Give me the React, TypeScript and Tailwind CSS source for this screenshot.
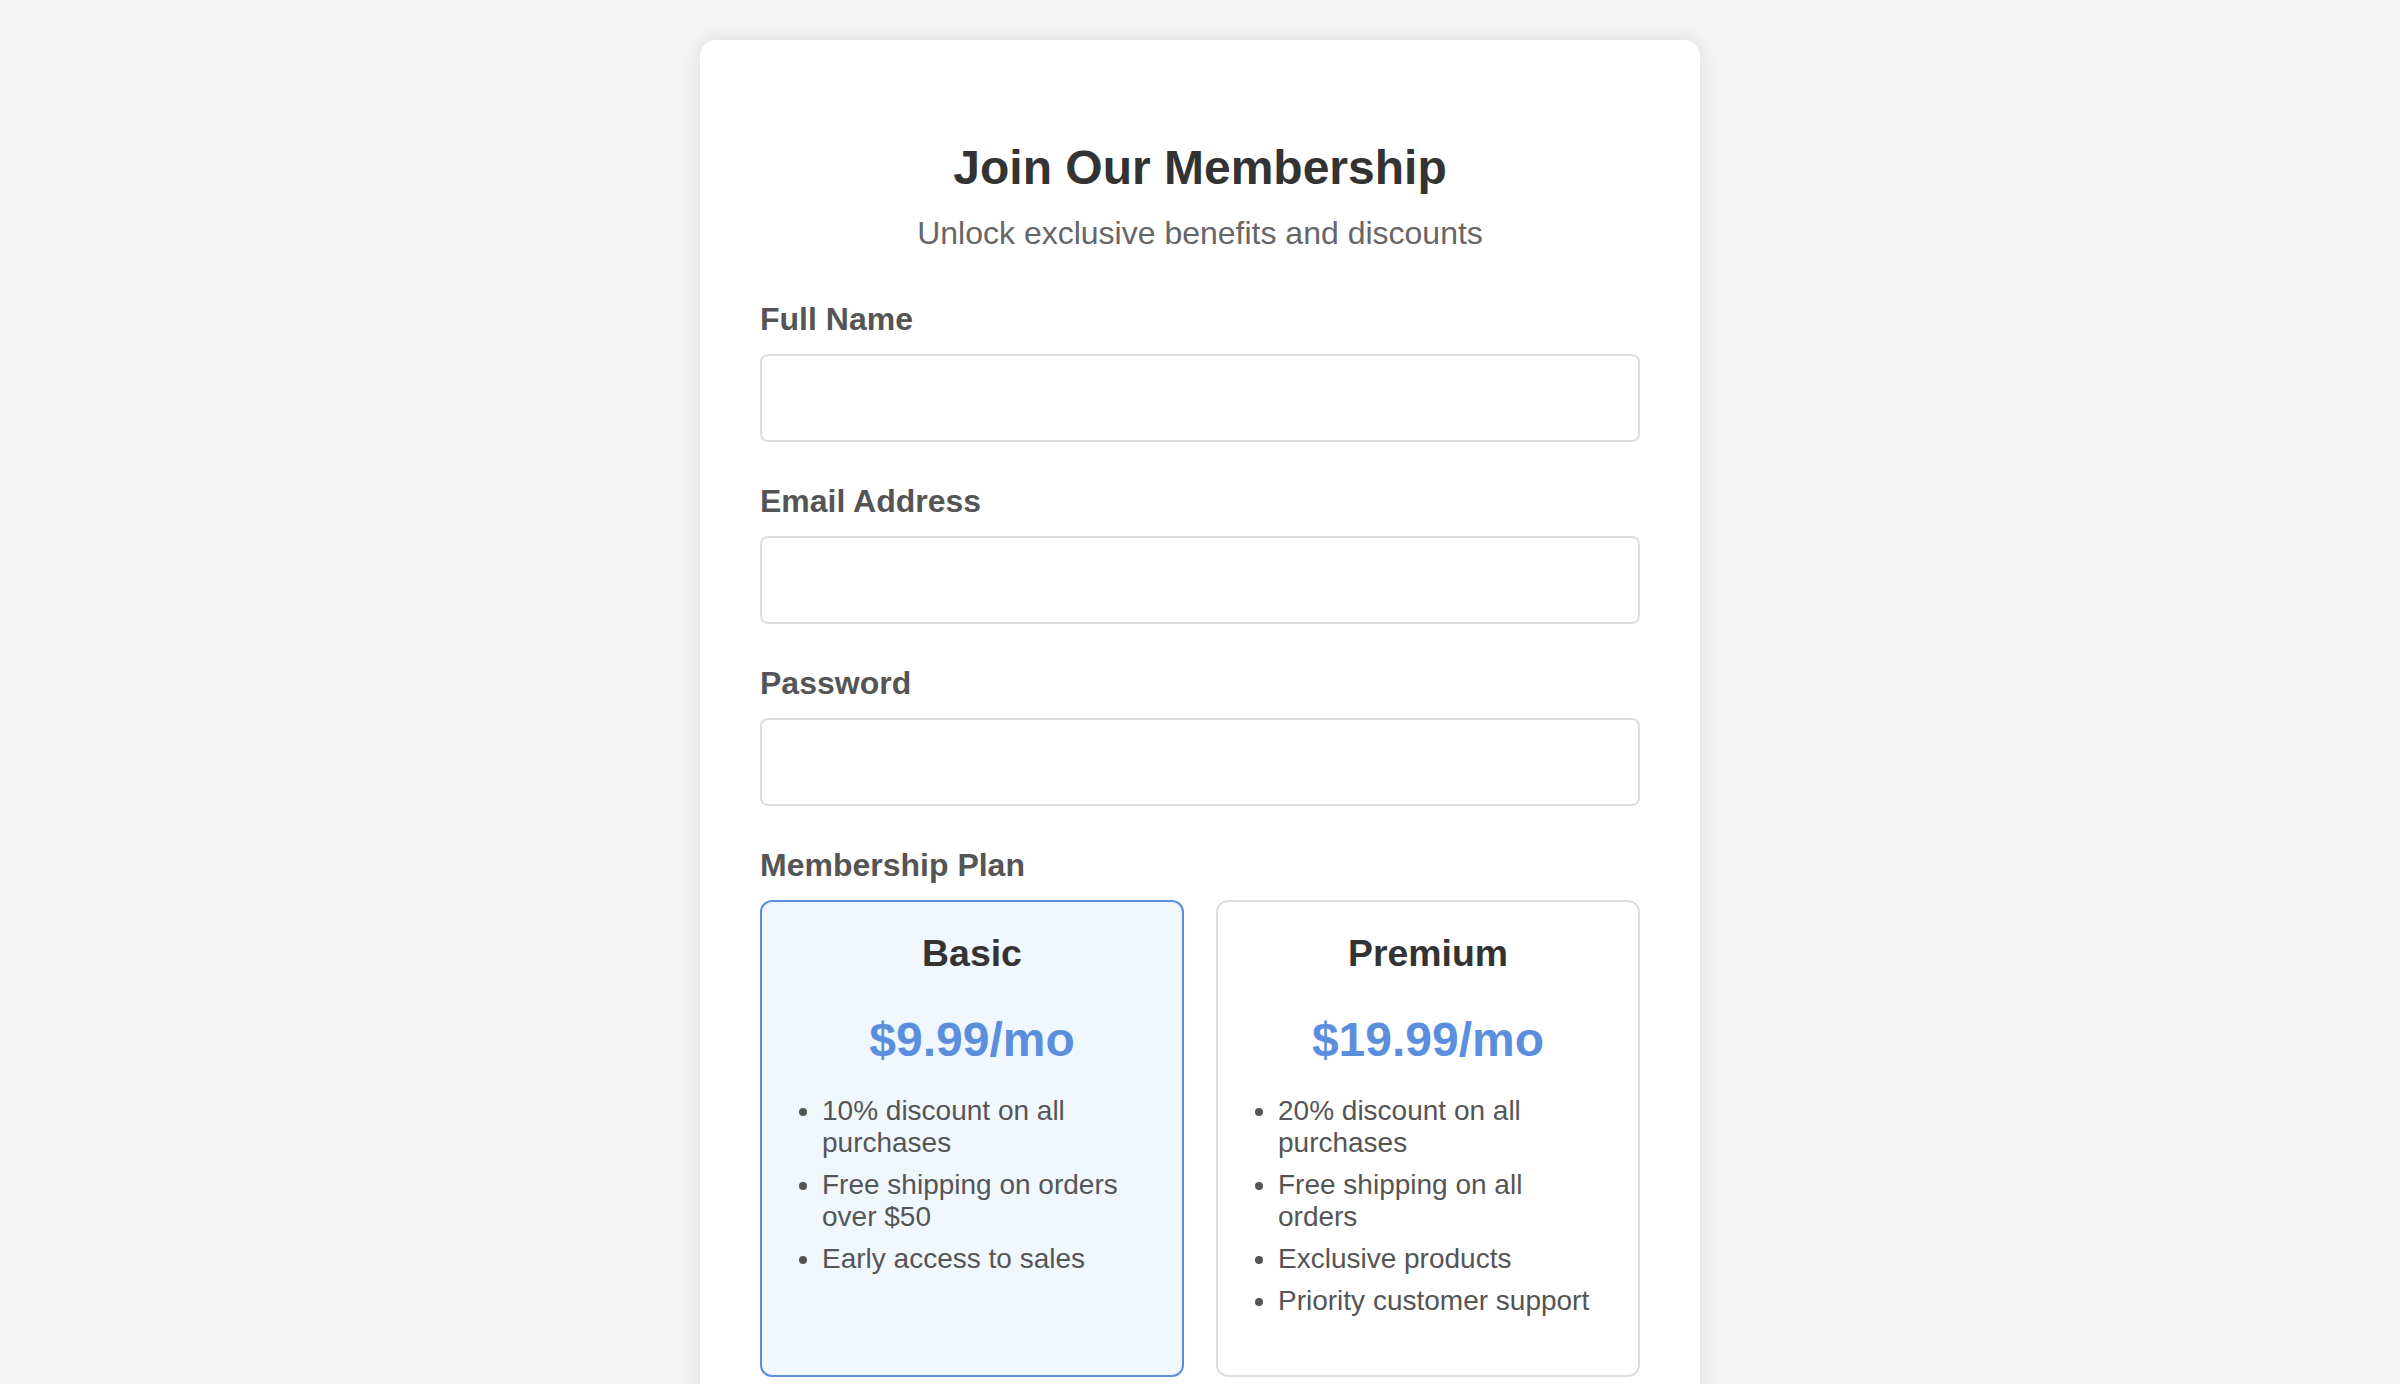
import { useState } from 'react'

type Plan = {
  id: string
  name: string
  price: string
  perks: string[]
}

const plans: Plan[] = [
  {
    id: 'basic',
    name: 'Basic',
    price: '$9.99/mo',
    perks: ['10% discount on all purchases', 'Free shipping on orders over $50', 'Early access to sales'],
  },
  {
    id: 'premium',
    name: 'Premium',
    price: '$19.99/mo',
    perks: ['20% discount on all purchases', 'Free shipping on all orders', 'Exclusive products', 'Priority customer support'],
  },
]

function Field({ label, type, value, onChange }: { label: string; type: string; value: string; onChange: (v: string) => void }) {
  return (
    <div className="mb-[40px]">
      <label className="block mb-[16px] text-[32px] leading-[38px] font-bold text-[#555]">{label}</label>
      <input
        type={type}
        value={value}
        onChange={e => onChange(e.target.value)}
        className="block w-full h-[88px] px-[24px] text-[32px] border-2 border-[#ddd] rounded-[8px] bg-white outline-none"
      />
    </div>
  )
}

export default function App() {
  const [name, setName] = useState('')
  const [email, setEmail] = useState('')
  const [password, setPassword] = useState('')
  const [selected, setSelected] = useState('basic')

  return (
    <div className="min-h-screen bg-[#f4f4f4] pt-[40px] pb-[40px] font-['Liberation_Sans',Arial,sans-serif]">
      <div className="w-[1000px] mx-auto bg-white rounded-[16px] shadow-[0_0_20px_rgba(0,0,0,0.1)] px-[60px] pt-[100px] pb-[60px]">
        {/* Header */}
        <div className="text-center mb-[48px]">
          <h1 className="text-[48px] leading-[56px] font-bold text-[#333]">Join Our Membership</h1>
          <p className="mt-[18px] text-[32px] leading-[38px] text-[#666]">Unlock exclusive benefits and discounts</p>
        </div>

        <Field label="Full Name" type="text" value={name} onChange={setName} />
        <Field label="Email Address" type="email" value={email} onChange={setEmail} />
        <Field label="Password" type="password" value={password} onChange={setPassword} />

        {/* Plans */}
        <div>
          <div className="mb-[16px] text-[32px] leading-[38px] font-bold text-[#555]">Membership Plan</div>
          <div className="grid grid-cols-2 gap-[32px]">
            {plans.map(plan => {
              const active = plan.id === selected
              return (
                <div
                  key={plan.id}
                  onClick={() => setSelected(plan.id)}
                  className={
                    active
                      ? 'cursor-pointer border-2 border-[#5b8fdd] bg-[#f0f7ff] rounded-[12px] p-[30px]'
                      : 'cursor-pointer border-2 border-[#ddd] bg-white rounded-[12px] p-[30px]'
                  }
                >
                  <h3 className="text-center text-[37.4px] leading-[43px] font-bold text-[#333] mb-[37px]">{plan.name}</h3>
                  <div className="text-center text-[48px] leading-[55px] font-bold text-[#5b8fdd]">{plan.price}</div>
                  <ul className="list-disc pl-[30px] pr-[10px] mt-[28px] mb-[28px] text-[28px] leading-[32px] text-[#555]">
                    {plan.perks.map(perk => (
                      <li key={perk} className="mb-[10px]">{perk}</li>
                    ))}
                  </ul>
                </div>
              )
            })}
          </div>
        </div>
      </div>
    </div>
  )
}
